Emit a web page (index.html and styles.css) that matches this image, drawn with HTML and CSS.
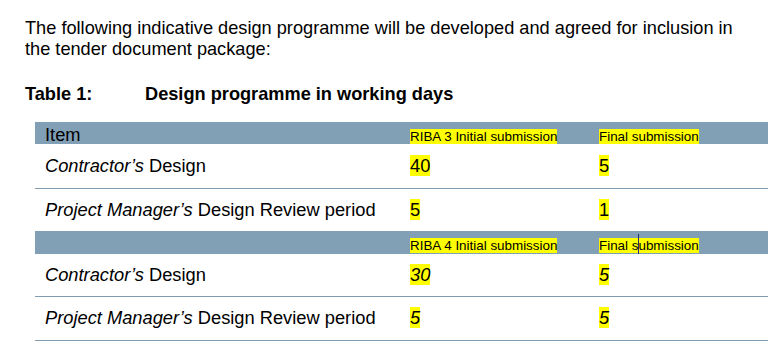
FILE: index.html
```html
<!DOCTYPE html>
<html lang="en">
<head>
<meta charset="utf-8">
<title>Design programme</title>
<link rel="stylesheet" href="styles.css">
</head>
<body>
<div class="page">
  <p class="intro">The following indicative design programme will be developed and agreed for inclusion in the tender document package:</p>
  <h2 class="caption"><span class="cap-num">Table 1:</span><span class="cap-title">Design programme in working days</span></h2>
  <div class="table">
    <div class="row head">
      <div class="cell">Item</div>
      <div class="cell"><span class="hl small">RIBA 3 Initial submission</span></div>
      <div class="cell"><span class="hl small">Final submission</span></div>
    </div>
    <div class="row body bordered r1">
      <div class="cell"><em>Contractor’s</em> Design</div>
      <div class="cell"><span class="hl">40</span></div>
      <div class="cell"><span class="hl">5</span></div>
    </div>
    <div class="row body r2">
      <div class="cell"><em>Project Manager’s</em> Design Review period</div>
      <div class="cell"><span class="hl">5</span></div>
      <div class="cell"><span class="hl">1</span></div>
    </div>
    <div class="row head second">
      <div class="cell"></div>
      <div class="cell"><span class="hl small">RIBA 4 Initial submission</span></div>
      <div class="cell"><span class="hl small">Final s<span class="caret"></span>ubmission</span></div>
    </div>
    <div class="row body bordered r3">
      <div class="cell"><em>Contractor’s</em> Design</div>
      <div class="cell"><span class="hl"><em>30</em></span></div>
      <div class="cell"><span class="hl"><em>5</em></span></div>
    </div>
    <div class="row body bordered r4">
      <div class="cell"><em>Project Manager’s</em> Design Review period</div>
      <div class="cell"><span class="hl"><em>5</em></span></div>
      <div class="cell"><span class="hl"><em>5</em></span></div>
    </div>
  </div>
</div>
</body>
</html>
```

FILE: styles.css
```css
html, body {
  margin: 0;
  padding: 0;
  background: #ffffff;
}

body {
  font-family: "Liberation Sans", Arial, sans-serif;
  color: #000000;
}

.page {
  padding: 18px 0 0 25px;
  width: 743px;
}

.intro {
  margin: 0;
  font-size: 18.2px;
  line-height: 20.8px;
  width: 725px;
}

.caption {
  margin: 24px 0 0 0;
  font-size: 18.2px;
  line-height: 20.8px;
  font-weight: bold;
  display: flex;
}

.cap-num {
  width: 120px;
}

.table {
  margin: 17.6px 0 0 10px;
  width: 733px;
  font-size: 18.3px;
}

.row {
  display: grid;
  grid-template-columns: 365px 189px 1fr;
}

.cell {
  padding-left: 10px;
}

.row.head {
  background: #819fb5;
  height: 22px;
  align-items: baseline;
  padding-top: 3px;
  box-sizing: border-box;
  line-height: 20px;
}

.row.head.second {
  height: 23px;
}

.row.body {
  align-items: center;
  box-sizing: border-box;
}

.row.bordered {
  border-bottom: 1px solid #7f9cb3;
}

.r1 { height: 45px; }
.r2 { height: 42px; }
.r3 { height: 43px; }
.r4 { height: 44px; }

em {
  font-style: italic;
}

.hl {
  background: #ffff00;
}

.small {
  font-size: 13.4px;
}

.caret {
  display: inline-block;
  width: 0;
  height: 20px;
  border-left: 1px solid #27306b;
  margin-right: -1px;
  vertical-align: -4px;
}
```
